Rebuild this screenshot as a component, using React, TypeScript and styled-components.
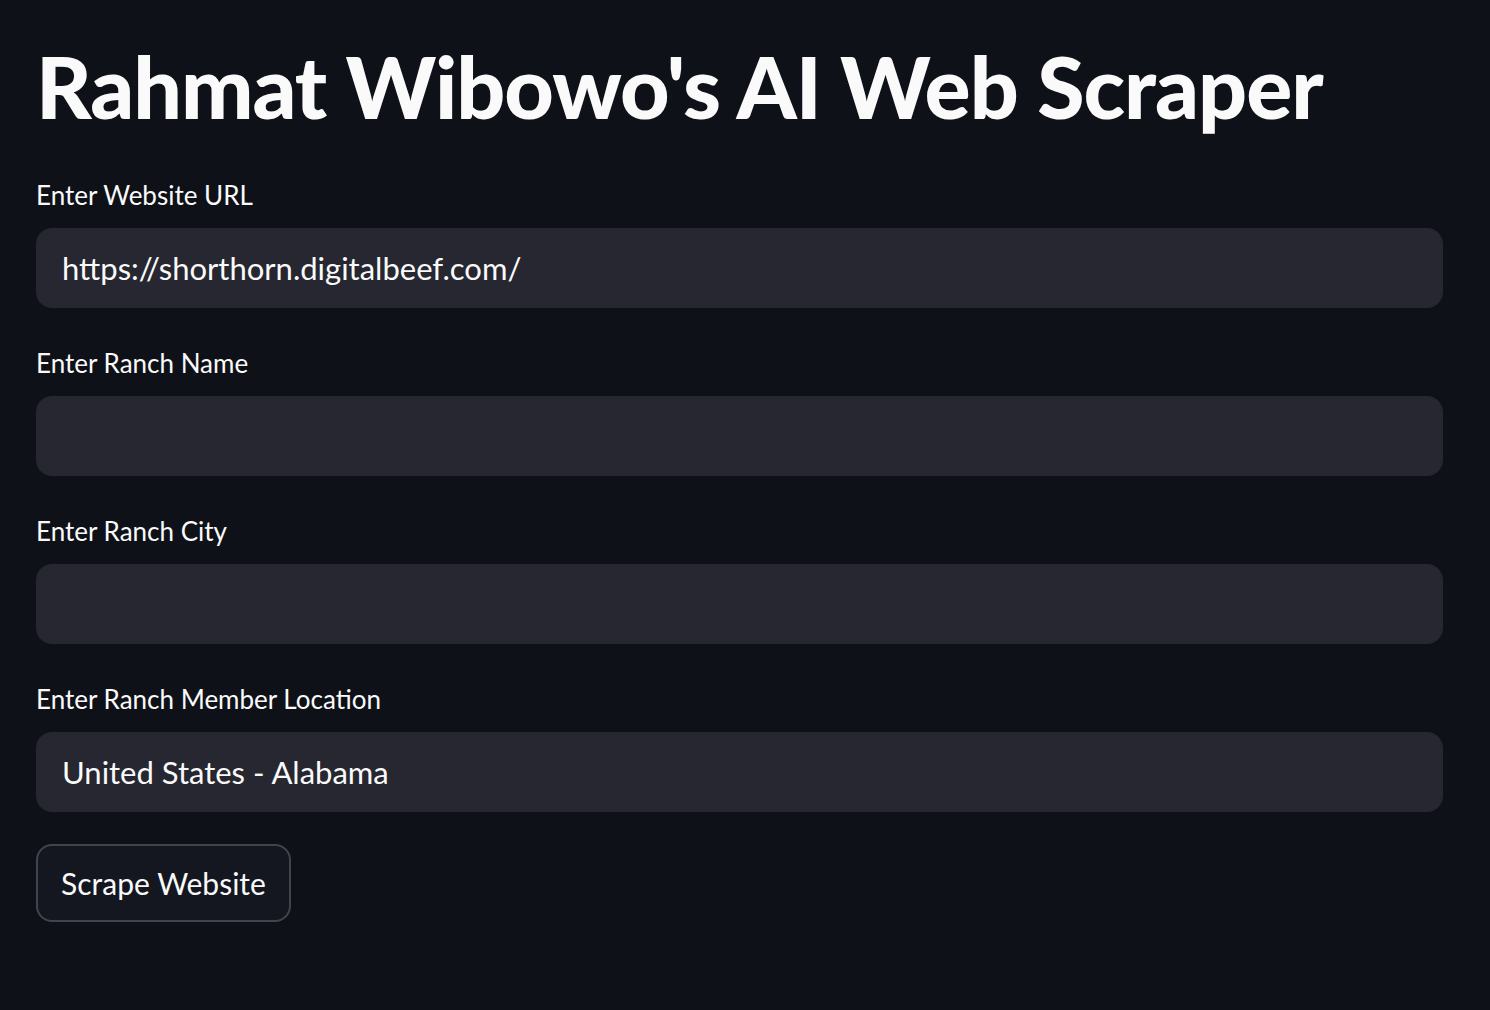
import React from "react";
import styled, { createGlobalStyle } from "styled-components";

const Global = createGlobalStyle`
  html, body {
    margin: 0;
    padding: 0;
    background: #0e1117;
  }
  body {
    font-family: Lato, "Open Sans", sans-serif;
    color: #fafafa;
  }
`;

const Page = styled.main`
  min-height: 1010px;
  box-sizing: border-box;
  padding: 34px 47px 0 36px;
  background: #0e1117;
  display: flex;
  flex-direction: column;
`;

const Title = styled.h1`
  margin: 0 0 37px 0;
  font-family: Lato, sans-serif;
  font-weight: 900;
  font-size: 86px;
  line-height: 104px;
  color: #fafafa;
  letter-spacing: -1px;
`;

const Form = styled.div`
  display: flex;
  flex-direction: column;
  gap: 35px;
`;

const Field = styled.label`
  display: flex;
  flex-direction: column;
  gap: 13px;
`;

const LabelText = styled.span`
  font-size: 26px;
  line-height: 40px;
  font-weight: 400;
  color: #fafafa;
`;

const Input = styled.input`
  box-sizing: border-box;
  height: 80px;
  width: 100%;
  border: 2px solid #262730;
  border-radius: 16px;
  background: #262730;
  color: #fafafa;
  padding: 0 24px;
  font-family: Lato, sans-serif;
  font-size: 31px;
  outline: none;
`;

const Button = styled.button`
  align-self: flex-start;
  margin-top: -3px;
  box-sizing: border-box;
  height: 78px;
  width: 255px;
  padding: 0 20px;
  white-space: nowrap;
  border: 2px solid rgba(250, 250, 250, 0.2);
  border-radius: 16px;
  background: #141720;
  color: #fafafa;
  font-family: Lato, sans-serif;
  font-size: 30px;
  cursor: pointer;
`;

export default function App() {
  return (
    <>
      <Global />
      <Page>
        <Title>Rahmat Wibowo's AI Web Scraper</Title>
        <Form>
          <Field>
            <LabelText>Enter Website URL</LabelText>
            <Input defaultValue="https://shorthorn.digitalbeef.com/" />
          </Field>
          <Field>
            <LabelText>Enter Ranch Name</LabelText>
            <Input defaultValue="" />
          </Field>
          <Field>
            <LabelText>Enter Ranch City</LabelText>
            <Input defaultValue="" />
          </Field>
          <Field>
            <LabelText>Enter Ranch Member Location</LabelText>
            <Input defaultValue="United States - Alabama" />
          </Field>
          <Button>Scrape Website</Button>
        </Form>
      </Page>
    </>
  );
}
